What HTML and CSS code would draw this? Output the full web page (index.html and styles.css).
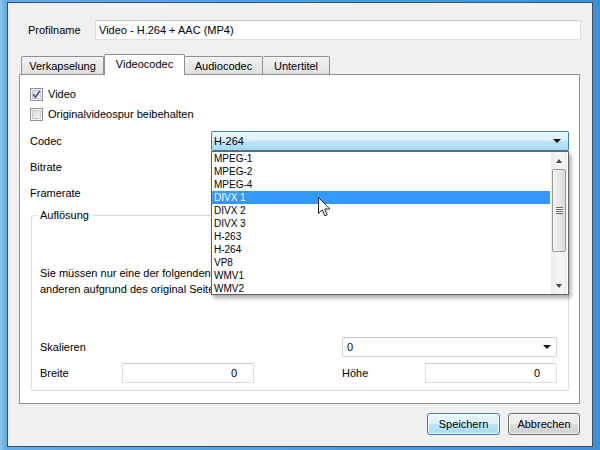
FILE: index.html
```html
<!DOCTYPE html>
<html lang="de">
<head>
<meta charset="utf-8">
<title>Profil</title>
<link rel="stylesheet" href="styles.css">
</head>
<body>
<div class="dialog">
  <div class="profile">
    <span class="plabel">Profilname</span>
    <div class="textbox">Video - H.264 + AAC (MP4)</div>
  </div>
  <div class="tabs">
    <div class="tab t1">Verkapselung</div>
    <div class="tab t2 active">Videocodec</div>
    <div class="tab t3">Audiocodec</div>
    <div class="tab t4">Untertitel</div>
  </div>
  <div class="panel">
    <div class="check">
      <span class="box"><svg width="9" height="9" viewBox="0 0 9 9"><path d="M1.2 4.3 L3.4 7.2 L7.8 1" fill="none" stroke="#3f5a8c" stroke-width="1.6"/></svg></span>
      <span>Video</span>
    </div>
    <div class="check second">
      <span class="box"></span>
      <span>Originalvideospur beibehalten</span>
    </div>
    <div class="row codec-row">
      <span class="lbl">Codec</span>
      <div class="combo focus">
        <span>H-264</span>
        <span class="arrow"></span>
        <div class="dropdown">
          <div class="list">
            <div class="item">MPEG-1</div>
            <div class="item">MPEG-2</div>
            <div class="item">MPEG-4</div>
            <div class="item sel">DIVX 1</div>
            <div class="item">DIVX 2</div>
            <div class="item">DIVX 3</div>
            <div class="item">H-263</div>
            <div class="item">H-264</div>
            <div class="item">VP8</div>
            <div class="item">WMV1</div>
            <div class="item">WMV2</div>
          </div>
          <div class="scrollbar">
            <div class="sbtn"><span class="up"></span></div>
            <div class="thumb"><span class="grip"></span></div>
            <div class="track"></div>
            <div class="sbtn"><span class="down"></span></div>
          </div>
          <svg class="cursor" width="13" height="20" viewBox="0 0 13 20"><path d="M0.5 0.5 V16.5 L4.3 12.8 L6.8 18.8 L9.2 17.8 L6.7 12 H11.8 Z" fill="#fff" stroke="#222" stroke-width="1" stroke-linejoin="round"/></svg>
        </div>
      </div>
    </div>
    <div class="row"><span class="lbl">Bitrate</span></div>
    <div class="row"><span class="lbl">Framerate</span></div>
    <fieldset class="group">
      <legend>Auflösung</legend>
      <div class="note">
        <div>Sie müssen nur eine der folgenden drei Angaben machen, VLC wird die</div>
        <div>anderen aufgrund des original Seitenverhältnis berechnen.</div>
      </div>
      <div class="dims">
        <span class="dlabel">Skalieren</span>
        <div class="combo plain"><span>0</span><span class="arrow"></span></div>
        <span class="dlabel">Breite</span>
        <div class="num">0</div>
        <span class="dlabel hoehe">Höhe</span>
        <div class="num">0</div>
      </div>
    </fieldset>
  </div>
  <div class="actions">
    <div class="btn primary">Speichern</div>
    <div class="btn">Abbrechen</div>
  </div>
</div>
</body>
</html>
```
FILE: styles.css
```css
* { box-sizing: border-box; }
html, body { margin: 0; padding: 0; }
body {
  width: 600px;
  height: 450px;
  overflow: hidden;
  background: linear-gradient(90deg, #8cc6f0 0, #62abe6 6px, #4d9fe2 50%, #3f8fd6 100%);
  font-family: "Liberation Sans", Arial, sans-serif;
  font-size: 11px;
  color: #000;
}
.dialog {
  margin: 2px 0 0 7px;
  width: 586px;
  height: 445px;
  border: 1px solid #34506e;
  background: #f0f0f0;
  padding: 17px 11px 0 11px;
}
.profile {
  display: flex;
  align-items: center;
  height: 20px;
}
.plabel {
  width: 76px;
  padding-left: 9px;
}
.textbox {
  flex: 1;
  height: 20px;
  line-height: 18px;
  padding-left: 3px;
  background: #fff;
  border: 1px solid #dedfe1;
  border-top-color: #c9cbce;
}
.tabs {
  margin-top: 14px;
  height: 20px;
  display: flex;
  align-items: flex-end;
  padding-left: 2px;
}
.tab {
  height: 18px;
  line-height: 18px;
  text-align: center;
  border: 1px solid #8d9098;
  border-bottom: none;
  border-radius: 2px 2px 0 0;
  background: linear-gradient(#f4f4f4, #e9e9e9 50%, #e0e0e0);
}
.t1 { width: 83px; }
.t2 { width: 81px; }
.t3 { width: 78px; }
.t4 { width: 67px; }
.tab.active {
  height: 21px;
  line-height: 19px;
  margin-bottom: -1px;
  background: #fff;
  position: relative;
  z-index: 1;
}
.t3 { border-left: none; }
.t4 { border-left: none; }
.panel {
  height: 330px;
  margin-right: 1px;
  border: 1px solid #8d9098;
  background: #fff;
  padding: 13px 10px 0 10px;
}
.check {
  display: flex;
  align-items: center;
  gap: 5px;
  height: 13px;
  line-height: 13px;
}
.check.second { margin-top: 7px; }
.box {
  width: 13px;
  height: 13px;
  border: 1px solid #8e8f8f;
  background: linear-gradient(135deg, #d5d8dc, #f7f7f7);
  box-shadow: inset 0 0 0 1px #f4f4f4, inset 0 0 0 2px #c4c8ce;
  display: flex;
  align-items: center;
  justify-content: center;
}
.row {
  display: flex;
  align-items: center;
  height: 20px;
  margin-top: 6px;
}
.codec-row { margin-top: 10px; }
.lbl { width: 181px; }
.combo {
  height: 20px;
  display: flex;
  align-items: center;
  padding-left: 2px;
  border-radius: 2px;
}
.combo.focus {
  flex: 1;
  position: relative;
  z-index: 5;
  border: 1px solid #3c7fb1;
  background: linear-gradient(#edf7fd 0%, #dcf0fb 45%, #c2e5f8 50%, #a9d8f2 100%);
}
.arrow {
  margin-left: auto;
  margin-right: 7px;
  width: 0;
  height: 0;
  border-left: 4px solid transparent;
  border-right: 4px solid transparent;
  border-top: 4px solid #111;
}
.dropdown {
  position: absolute;
  top: calc(100% + 1px);
  left: -1px;
  right: -1px;
  height: 144px;
  border: 1px solid #646464;
  background: #fff;
  display: flex;
  gap: 1px;
  box-shadow: 2px 3px 4px rgba(0, 0, 0, 0.35);
}
.list {
  width: 338px;
  font-size: 10px;
}
.item {
  height: 13px;
  line-height: 13px;
  padding-left: 2px;
}
.item.sel {
  background: #3399ff;
  color: #fff;
}
.scrollbar {
  width: 16px;
  display: flex;
  flex-direction: column;
  background: linear-gradient(90deg, #ececec, #f6f6f6 60%, #eeeeee);
}
.sbtn {
  height: 17px;
  display: flex;
  align-items: center;
  justify-content: center;
}
.up, .down {
  width: 0;
  height: 0;
  border-left: 3.5px solid transparent;
  border-right: 3.5px solid transparent;
}
.up { border-bottom: 4px solid #4a4a4a; }
.down { border-top: 4px solid #4a4a4a; }
.thumb {
  height: 83px;
  margin: 0 1px;
  border: 1px solid #9a9a9a;
  border-radius: 2px;
  background: linear-gradient(90deg, #f4f4f4, #e8e8e8 50%, #d9d9d9);
  display: flex;
  align-items: center;
  justify-content: center;
}
.grip {
  width: 7px;
  height: 7px;
  background: repeating-linear-gradient(#6a6a6a 0 1px, #f8f8f8 1px 2px);
}
.track { flex: 1; }
.cursor {
  position: absolute;
  left: 106px;
  top: 45px;
}
.group {
  margin: 5px 0 0 1px;
  padding: 0 10px 7px 8px;
  border: 1px solid #d5dfe5;
  border-radius: 3px;
  min-width: 0;
}
.group legend {
  padding: 0 3px;
  margin-left: -3px;
  line-height: 14px;
}
.note {
  margin-top: 43px;
  line-height: 16px;
  white-space: nowrap;
}
.dims {
  margin-top: 40px;
  display: grid;
  grid-template-columns: 82px 132px 88px 83px 132px;
  grid-template-rows: 20px 20px;
  row-gap: 6px;
  align-items: center;
}
.combo.plain {
  grid-column: 4 / 6;
  padding-left: 4px;
  border: 1px solid #d3d3d3;
  border-top-color: #c6c6c6;
  background: #fff;
}
.combo.plain .arrow { margin-right: 5px; }
.dims > .dlabel:nth-of-type(2) { grid-column: 1; }
.hoehe { grid-column: 4; }
.num {
  height: 20px;
  line-height: 18px;
  text-align: right;
  padding-right: 16px;
  border: 1px solid #e0e0e0;
  border-top-color: #cdcdcd;
  background: #fff;
}
.actions {
  display: flex;
  justify-content: flex-end;
  gap: 8px;
  margin: 9px 1px 0 0;
}
.btn {
  width: 72px;
  height: 22px;
  line-height: 20px;
  text-align: center;
  border: 1px solid #707070;
  border-radius: 3px;
  background: linear-gradient(#f2f2f2, #ebebeb 50%, #dddddd 51%, #cfcfcf);
  box-shadow: inset 0 0 0 1px rgba(255, 255, 255, 0.7);
}
.btn.primary {
  width: 73px;
  border-color: #3c7fb1;
  background: linear-gradient(#eaf6fd, #d9f0fc 50%, #bee6fd 51%, #a7d9f5);
}
```
